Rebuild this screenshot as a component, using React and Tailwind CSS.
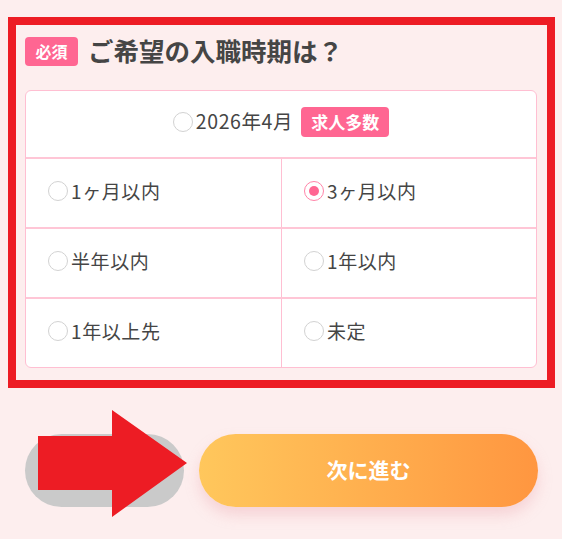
import React from "react";

const font = { fontFamily: '"Noto Sans CJK JP", "Noto Sans", sans-serif' };

function Radio({ checked }) {
  return checked ? (
    <span className="flex h-[20px] w-[20px] shrink-0 items-center justify-center rounded-full border border-[#ff84a8] bg-white">
      <span className="h-[10px] w-[10px] rounded-full bg-[#ff6692]" />
    </span>
  ) : (
    <span className="block h-[20px] w-[20px] shrink-0 rounded-full border border-[#d2d2d2] bg-white" />
  );
}

function Option({ label, checked, right }) {
  return (
    <div
      className={
        "flex items-center gap-[3px] pb-[4px] pl-[22px] " +
        (right ? "" : "border-r border-[#ffbfd2]")
      }
    >
      <Radio checked={checked} />
      <span className="pb-[2px] text-[19px] leading-none tracking-[0.6px] text-[#454545]">{label}</span>
    </div>
  );
}

export default function App() {
  const rows = [
    ["1ヶ月以内", "3ヶ月以内", false, true],
    ["半年以内", "1年以内", false, false],
    ["1年以上先", "未定", false, false],
  ];
  return (
    <div className="relative min-h-[539px] w-[562px] overflow-hidden bg-[#fdeeee] pt-[17px]" style={font}>
      <div className="ml-[8px] h-[371px] w-[547px] border-8 border-[#ed1c24] pl-[9px] pr-[10px] pt-[12px]">
        <div className="flex items-center gap-[10px]">
          <span className="flex h-[29px] w-[53px] items-center justify-center rounded-[4px] bg-[#ff6692] pb-[1px] text-[16px] font-bold text-white">
            必須
          </span>
          <span className="pb-[3px] text-[25.5px] font-bold leading-none text-[#454545]">ご希望の入職時期は？</span>
        </div>
        <div className="mt-[24px] overflow-hidden rounded-md border border-[#ffbfd2] bg-white">
          <div className="flex h-[66px] items-center justify-center pb-[4px]">
            <Radio />
            <span className="ml-[3px] pb-[2px] text-[19.5px] leading-none tracking-[0.6px] text-[#454545]">2026年4月</span>
            <span className="ml-[8px] flex h-[30px] items-center rounded-[4px] bg-[#ff6692] px-[10px] pb-[1px] text-[17px] font-bold text-white">
              求人多数
            </span>
          </div>
          {rows.map(([a, b, ca, cb], i) => (
            <div key={i} className="grid h-[70px] grid-cols-[256px_1fr] border-t-2 border-[#ffc6d6]">
              <Option label={a} checked={ca} />
              <Option label={b} checked={cb} right />
            </div>
          ))}
        </div>
      </div>
      <div className="mt-[46px] flex gap-[15px] pl-[25px]">
        <div className="h-[73px] w-[159px] rounded-full bg-[#cacaca]" />
        <div className="flex h-[73px] w-[339px] items-center justify-center rounded-full bg-gradient-to-r from-[#ffc75c] to-[#ff9640] pb-[2px] text-[21px] font-bold text-white shadow-[0_8px_14px_rgba(235,160,170,0.35)]">
          次に進む
        </div>
      </div>
      <svg className="absolute left-0 top-0" width="562" height="539" viewBox="0 0 562 539">
        <polygon points="38,436 112,436 112,410 187,463 112,517 112,490 38,490" fill="#ed1c24" />
      </svg>
    </div>
  );
}
